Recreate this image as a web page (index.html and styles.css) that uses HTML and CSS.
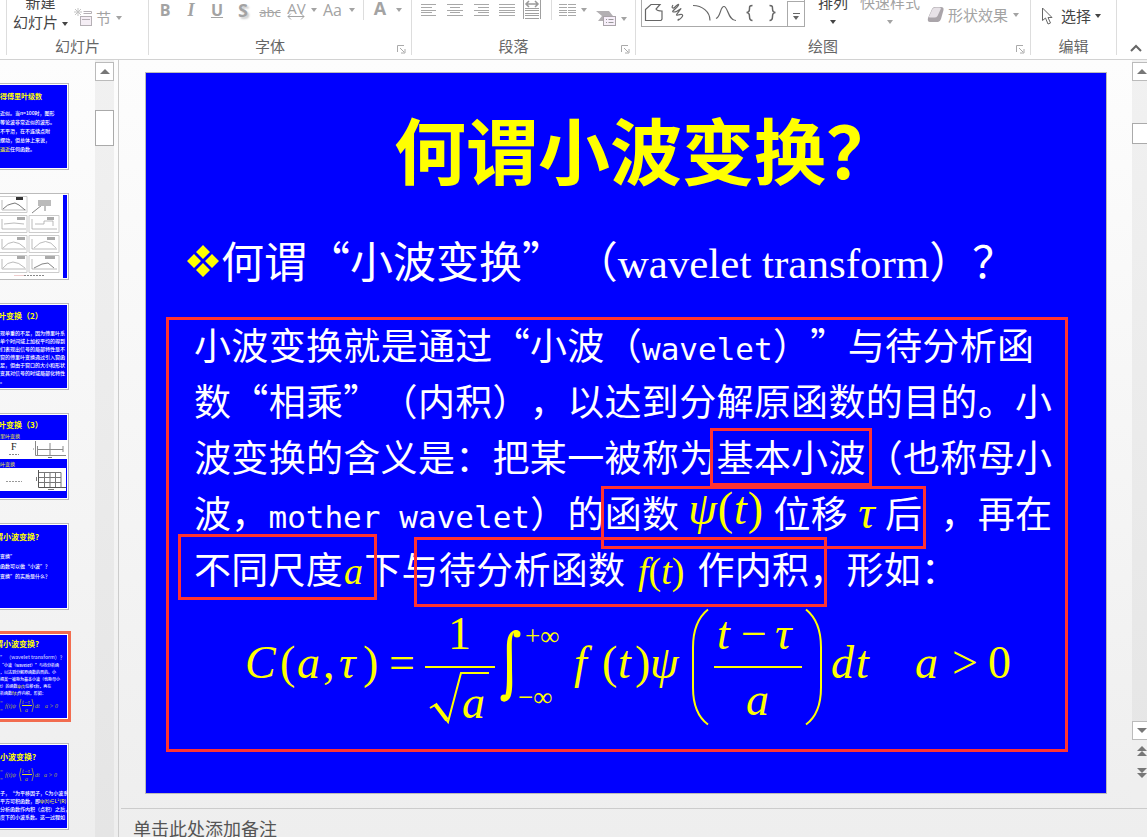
FILE: index.html
```html
<!DOCTYPE html>
<html lang="zh-CN">
<head>
<meta charset="utf-8">
<title>何谓小波变换？</title>
<link rel="stylesheet" href="styles.css">
</head>
<body>
<header class="ribbon">
  <section class="group group-slides">
    <div class="tools">
      <button class="two-line"><span>新建</span><span>幻灯片<i class="caret"></i></span></button>
      <button class="side off">
        <svg width="20" height="20" viewBox="0 0 20 20"><path d="M4 0v8M0 4h8M1 1l6 6M7 1L1 7" stroke="#c4c4c4" fill="none"/><path d="M9.500 3.500h8v2h-8" stroke="#b5b0b5" fill="none"/><rect x="6.500" y="8.500" width="11" height="9" fill="#f5eef5" stroke="#b5b0b5"/><path d="M8 11.500h8" stroke="#b5b0b5"/></svg>
        <span>节</span><i class="caret"></i></button>
    </div>
    <div class="label">幻灯片</div>
  </section>
  <section class="group group-font">
    <div class="tools font-tools off">
      <button class="glyph bold">B</button>
      <button class="glyph italic">I</button>
      <button class="glyph underline">U</button>
      <button class="glyph shadow">S</button>
      <button class="glyph strike">abc</button>
      <button class="glyph spacing"><span>AV</span><i class="caret"></i>
        <svg class="under" width="18" height="7" viewBox="0 0 18 7"><path d="M1 3.500h16M4 .5l-3 3 3 3M14 .5l3 3-3 3" fill="none" stroke="#a3a3a3"/></svg></button>
      <button class="glyph"><span>Aa</span><i class="caret"></i></button>
      <span class="rule"></span>
      <button class="glyph color"><span>A</span><i class="caret"></i></button>
    </div>
    <div class="label wide">字体</div>
    <button class="launcher" aria-label="字体设置"><svg width="9" height="9" viewBox="0 0 9 9"><path d="M.5 7V.5H7M3 3l4 4M8 4v4H4" fill="none" stroke="#aaa"/></svg></button>
  </section>
  <section class="group group-para">
    <div class="tools para-tools off">
      <button aria-label="左对齐"><svg width="16" height="20" viewBox="0 0 16 20"><path d="M0 4.500h15M0 7.500h11M0 10.500h15M0 12.500h11M0 15.500h15" stroke="#a8a8a8"/></svg></button>
      <button aria-label="居中"><svg width="16" height="20" viewBox="0 0 16 20"><path d="M0 4.500h16M3 7.500h10M0 10.500h16M3 12.500h10M0 15.500h16" stroke="#a8a8a8"/></svg></button>
      <button aria-label="右对齐"><svg width="16" height="20" viewBox="0 0 16 20"><path d="M1 4.500h15M5 7.500h11M1 10.500h15M5 12.500h11M1 15.500h15" stroke="#a8a8a8"/></svg></button>
      <button aria-label="两端对齐"><svg width="16" height="20" viewBox="0 0 16 20"><path d="M0 4.500h16M0 7.500h16M0 10.500h16M0 12.500h16M0 15.500h16" stroke="#a8a8a8"/></svg></button>
      <button aria-label="分散对齐"><svg width="18" height="20" viewBox="0 0 18 20"><path d="M.5 0v19M17.500 0v19M2 8.500h14M2 10.500h14M2 13.500h14M2 15.500h14M2 18.500h14" stroke="#a0a0a0"/><path d="M4 4h10M6 1L3 4l3 3M12 1l3 3-3 3" fill="none" stroke="#999" stroke-width="1.500"/></svg></button>
      <span class="rule"></span>
      <button aria-label="分栏"><svg width="17" height="20" viewBox="0 0 17 20"><path d="M0 4.500h8M0 7.500h8M0 10.500h8M0 12.500h8M0 15.500h8M9 4.500h8M9 7.500h8M9 10.500h8M9 12.500h8M9 15.500h8" stroke="#a8a8a8"/></svg><i class="caret"></i></button>
      <button class="smartart" aria-label="转换为 SmartArt"><svg width="21" height="16" viewBox="0 0 21 16"><path d="M0 0h13l4 5-4 5H2l4-5z" fill="#b3b0b3"/><rect x="7.500" y="5.500" width="12" height="9" fill="#f7effa" stroke="#a9a3a9"/><path d="M10 8.500h1M12.500 8.500h5M10 11.500h1M12.500 11.500h5" stroke="#999"/></svg><i class="caret"></i></button>
    </div>
    <div class="label wide">段落</div>
    <button class="launcher" aria-label="段落设置"><svg width="9" height="9" viewBox="0 0 9 9"><path d="M.5 7V.5H7M3 3l4 4M8 4v4H4" fill="none" stroke="#aaa"/></svg></button>
  </section>
  <section class="group group-draw">
    <div class="tools">
      <div class="gallery">
        <svg width="145" height="26" viewBox="0 0 145 26" fill="none" stroke="#666" stroke-width="1.200"><path d="M3.500 9.500L9 4.500h9l-4 4.500c1 2 3 2 6 2v8l-1 1.500H3.500z"/><path d="M31 5c-2 3 0 4 2 2s5-4 3-1-8 6-4 6 9-6 6-2-5 6-2 5 6-1 4 2-6 4-3 2"/><path d="M51 5.500c9 0 17 6 17 15"/><path d="M74 18.500c5-2 4-12 8-12s4 14 12 14"/><path d="M110.500 5.500c-3 0-3 1-3 3s0 4-3 4c3 0 3 2 3 4s0 4 3 4M127.500 5.500c3 0 3 1 3 3s0 4 3 4c-3 0-3 2-3 4s0 4-3 4" stroke-width="1.500"/></svg>
        <button class="more" aria-label="更多形状"><i class="bar"></i><i class="caret"></i></button>
      </div>
      <button class="stack arrange"><span>排列</span><i class="caret"></i></button>
      <button class="stack styles off"><span>快速样式</span><i class="caret"></i></button>
      <button class="side effects off">
        <svg width="19" height="18" viewBox="0 0 19 18"><path d="M2 12l4-9q1-2 3-2h6q3 0 2.500 3L15 13q-1 3-3 3H4q-3 0-2-4z" fill="#aaa5aa"/><path d="M3 10.500L6.500 3q1-1.500 3-1.500h4q2 0 1 2L11.500 10q-1 1.500-3 1.500H4q-1.500 0-1-1z" fill="#e6e1e6"/></svg>
        <span>形状效果</span><i class="caret"></i></button>
    </div>
    <div class="label wide">绘图</div>
    <button class="launcher" aria-label="绘图设置"><svg width="9" height="9" viewBox="0 0 9 9"><path d="M.5 7V.5H7M3 3l4 4M8 4v4H4" fill="none" stroke="#aaa"/></svg></button>
  </section>
  <section class="group group-edit">
    <div class="tools">
      <button class="side select">
        <svg width="13" height="18" viewBox="0 0 13 18"><path d="M1.500 1v12.500l3-2.500 2.500 6 2.500-1-2.500-5.500h4z" fill="#fff" stroke="#666"/></svg>
        <span>选择</span><i class="caret"></i></button>
    </div>
    <div class="label">编辑</div>
  </section>
  <button class="collapse" aria-label="折叠功能区"><svg width="12" height="8" viewBox="0 0 12 8"><path d="M1 7l5-5 5 5" fill="none" stroke="#666" stroke-width="2"/></svg></button>
</header>

<div class="workspace">
  <nav class="thumbs" aria-label="幻灯片缩略图">
    <ol>
      <li class="thumb t1"><b>得傅里叶级数</b>
        <p>近似。当n=100时，图形</p><p>等论波非常近似的波形。</p><p>不平滑，在不连续点附</p><p>摆动，但总体上来说，</p><p><em>逼近</em>任何函数。</p></li>
      <li class="thumb t2">
        <svg width="67" height="83" viewBox="0 0 67 83"><rect width="67" height="83" fill="#fff"/><rect x="63" width="4" height="83" fill="#00f"/>
          <g fill="none" stroke="#ccc"><path d="M0 1.500h27v16H0M0 20.500h27v17H0M0 40.500h27v17H0M0 60.500h27v17H0M29 20.500h30v17H29zM29 40.500h30v17H29zM29 60.500h30v17H29z"/></g>
          <g fill="none" stroke="#aaa" stroke-width=".8"><path d="M2 5v10h24M2 24v10h24M2 44v10h24M2 64v10h24M32 24v10h25M32 44v10h25M32 64v10h25"/><path d="M3 14q5-5 8-5l4-1 4 2 6 5" stroke="#555"/><path d="M4 29l10-1 10 1M35 29h9v-3h9v5M3 53q10-12 22 0M34 53q12-13 22 0M3 73q9-12 22 0"/><path d="M34 73l8-4 6-1 6 5M32 18l10-8M45 11v5" stroke="#666"/></g>
          <rect x="16" y="2" width="7" height="3" fill="#333"/><rect x="38" y="5" width="13" height="6" fill="#bbb"/><g fill="#aaa"><rect x="17" y="22" width="8" height="3"/><rect x="17" y="42" width="8" height="3"/><rect x="17" y="61" width="8" height="3"/><rect x="47" y="22" width="7" height="3"/><rect x="47" y="42" width="8" height="3"/><rect x="45" y="61" width="10" height="3"/></g>
          <path d="M14 80.500h10" stroke="#ecc"/><path d="M24 80.500h20" stroke="#888" stroke-dasharray="2 1"/></svg></li>
      <li class="thumb t3"><b>叶变换（2）</b>
        <p>现单重的不足，因为傅里叶系</p><p>单个时间域上加权平均的得到</p><p>们表现出信号的局部特性是不</p><p>窗的傅里叶变换通过引入窗函</p><p>足，但由于窗口的大小和形状</p><p>变其对信号的时域局部化特性</p><p>。</p></li>
      <li class="thumb t4"><b>叶变换（3）</b><em>里叶变换</em>
        <svg width="67" height="19" viewBox="0 0 67 19"><rect width="67" height="19" fill="#fff"/><text x="11" y="10" font-family="Liberation Serif" font-size="10" fill="#222">F</text><path d="M9 14.500h10" stroke="#888" stroke-dasharray="2 1"/><path d="M35.500 1v14.500H66M33 9h1M50 3v12M37 9.500h26M37.500 6v9M63 6v6" fill="none" stroke="#888"/><path d="M48 17.500h4" stroke="#777"/></svg>
        <em>叶变换</em>
        <svg width="67" height="24" viewBox="0 0 67 24"><rect width="66" height="23" fill="#fff"/><path d="M6 13.500h16" stroke="#999" stroke-dasharray="2 1"/><path d="M38.500 2v17.500H66" fill="none" stroke="#555"/><path d="M39 4.500h22v15M44.500 4v15M50 4v15M55.500 4v15M39 9.500h22M39 14.500h22" fill="none" stroke="#777"/><path d="M48 21.500h6M36.500 9v4" stroke="#777"/></svg></li>
      <li class="thumb t5"><b>谓小波变换?</b><p>变换”</p><p>函数可以做“小波”？</p><p>变换”的实质是什么？</p></li>
      <li class="thumb t6 current"><b>谓小波变换?</b><p class="sub">” （wavelet transform）？</p>
        <p>“小波（wavelet）”与待分析函</p><p>，以达到分解原函数的目的。小</p><p>把某一被称为基本小波（也称母小</p><p>t）的函数<em>ψ(t)</em>位移τ后，再在</p><p>析函数<em>f(t)</em>作内积，形如：</p>
        <svg class="eq" width="67" height="16" viewBox="0 0 67 16" font-family="Liberation Serif" font-style="italic" font-size="6" fill="#aaa84c"><text x="0" y="5" font-size="4">∞</text><text x="0" y="13" font-size="4">∞</text><text x="5" y="10">f(t)ψ</text><path d="M21 1q-3 7 0 13M32 1q3 7 0 13" fill="none" stroke="#aaa84c" stroke-width=".8"/><text x="22" y="6">t−τ</text><path d="M22 7.500h10" stroke="#dddc20"/><text x="25" y="14">a</text><text x="35" y="10">dt</text><text x="45" y="10">a &gt; 0</text></svg></li>
      <li class="thumb t7"><b>小波变换?</b>
        <svg class="eq" width="67" height="16" viewBox="0 0 67 16" font-family="Liberation Serif" font-style="italic" font-size="6" fill="#aaa84c"><text x="0" y="5" font-size="4">∞</text><text x="0" y="13" font-size="4">∞</text><text x="5" y="10">f(t)ψ</text><path d="M21 1q-3 7 0 13M32 1q3 7 0 13" fill="none" stroke="#aaa84c" stroke-width=".8"/><text x="22" y="6">t−τ</text><path d="M22 7.500h10" stroke="#dddc20"/><text x="25" y="14">a</text><text x="35" y="10">dt</text><text x="44" y="10">a &gt; 0</text></svg>
        <p>子，“为平移因子，C为小波系</p><p>平方可积函数，即<em>ψ(t)∈L²(R)</em></p><p>分析函数作内积（点积）之后，</p><p>度下的小波系数。这一过程如</p></li>
    </ol>
  </nav>
  <div class="scroll left-scroll">
    <button class="arrow" aria-label="向上滚动"><i class="tri up"></i></button>
    <div class="handle"></div>
  </div>
  <main class="editor">
    <div class="view">
      <div class="stage">
        <article class="slide">
          <h1>何谓小波变换？</h1>
          <h2><svg width="32" height="32" viewBox="0 0 32 32" fill="#ff0"><path d="M16 0l7 7-7 7-7-7zM16 18l7 7-7 7-7-7zM7 9l7 7-7 7-7-7zM25 9l7 7-7 7-7-7z"/></svg><span>何谓“小波变换” （<span class="serif">wavelet transform</span>）？</span></h2>
          <section class="body">
            <p class="short">小波变换就是通过“小波（<span class="mono">wavelet</span>）”与待分析函</p>
            <p>数“相乘”（内积），以达到分解原函数的目的。小</p>
            <p>波变换的含义是：把某一被称为基本小波（也称母小</p>
            <p>波，<span class="mono">mother wavelet</span>）的函数<span class="math psi"><i>ψ</i><span class="paren">(</span><i>t</i><span class="paren">)</span></span>位移<span class="math tau"><i>τ</i></span>后<span class="half"></span>，再在</p>
            <p class="last">不同尺度<span class="math var"><i>a</i></span>下与待分析函数<span class="math fun"><i>f</i>(<i>t</i>)</span>作内积，形如：</p>
            <svg class="equation" width="780" height="130" viewBox="240 600 780 130" role="img" aria-label="连续小波变换公式">
              <g class="up"><text x="280" y="678">(</text><text x="323" y="678">,</text><text x="363" y="678">)</text><text x="389" y="678">=</text><text x="448" y="649">1</text><text x="602" y="678">(</text><text x="635" y="678">)</text><text x="741" y="649">−</text><text x="952" y="678">&gt;</text><text x="988" y="678">0</text></g>
              <g class="it"><text x="245" y="678">C</text><text x="297" y="678">a</text><text x="339" y="678">τ</text><text x="462" y="718">a</text><text x="574" y="678">f</text><text x="618" y="678">t</text><text x="650" y="678">ψ</text><text x="717" y="649">t</text><text x="775" y="649">τ</text><text x="746" y="715">a</text><text x="831" y="678">d</text><text x="856" y="678">t</text><text x="915" y="678">a</text></g>
              <g class="small"><text x="525" y="645">+∞</text><text x="518" y="706">−∞</text></g>
              <g fill="none" stroke="#ff0" stroke-width="2"><path d="M425 667h70M714 667h88"/><path d="M430 708l5-3 13 17 13-49h28"/><path d="M435 704l12 16" stroke-width="4"/><path d="M708 609.500q-15 12-15 38v40q0 26 15 37M806 609.500q15 12 15 38v40q0 26-15 37"/></g>
              <path d="M520 634c0-5-7-6-11 1-3 6-2 14-2 30 0 18 0 26-2 31-1 3-2 1-4 2 0 5 8 5 10-3 2-7 1-17 1-30 0-18-1-25 1-31 2-3 6 1 7 0z" fill="#ff0"/><circle cx="517" cy="634" r="3.500" fill="#ff0"/><circle cx="504" cy="698" r="3.500" fill="#ff0"/>
            </svg>
            <span class="mark m1"></span><span class="mark m2"></span><span class="mark m3"></span><span class="mark m4"></span>
          </section>
        </article>
      </div>
      <div class="scroll right-scroll">
        <button class="arrow" aria-label="向上滚动"><i class="tri up"></i></button>
        <div class="handle"></div>
        <button class="arrow down" aria-label="向下滚动"><i class="tri dn"></i></button>
        <button class="page" aria-label="上一张幻灯片"><i class="tri up"></i><i class="tri up"></i></button>
        <button class="page" aria-label="下一张幻灯片"><i class="tri dn"></i><i class="tri dn"></i></button>
      </div>
    </div>
    <footer class="notes">单击此处添加备注</footer>
  </main>
</div>
</body>
</html>
```
FILE: styles.css
```css
* { box-sizing: border-box; }
html, body { height: 100%; margin: 0; }
body {
  display: flex;
  flex-direction: column;
  overflow: hidden;
  font-family: "Noto Sans CJK SC", sans-serif;
  color: #444;
  text-spacing-trim: space-all;
}
button { border: 0; padding: 0; margin: 0; background: none; color: inherit; font: inherit; }
p, h1, h2, ol { margin: 0; padding: 0; }
svg { display: block; flex: none; }

/* Ribbon */
.ribbon {
  display: flex;
  height: 60px;
  flex: none;
  padding-left: 6px;
  border-bottom: 1px solid #d2d2d2;
  background: #fff;
  overflow: hidden;
  font-size: 15px;
}
.group { position: relative; display: flex; flex-direction: column; flex: none; height: 55px; border-right: 1px solid #ddd; }
.group-slides { width: 143px; border-left: 1px solid #ddd; }
.group-font { width: 263px; }
.group-para { width: 224px; }
.group-draw { width: 395px; }
.group-edit { width: 86px; }
.tools { display: flex; height: 37px; align-items: flex-start; }
.label { height: 18px; line-height: 18px; text-align: center; color: #666; }
.label.wide { padding-right: 20px; }
.launcher { position: absolute; right: 5px; bottom: 1px; }
.off { color: #a3a3a3; }
.caret { display: inline-block; flex: none; border: solid transparent; border-width: 4px 3px 0; border-top-color: currentColor; }
.two-line { display: flex; flex-direction: column; align-items: center; margin: -8px 0 0 6px; line-height: 20px; white-space: nowrap; }
.two-line .caret { margin: 0 0 2px 4px; }
.side { display: flex; align-items: center; height: 20px; margin-top: 8px; line-height: 20px; white-space: nowrap; }
.group-slides .side { margin-left: 6px; gap: 2px; }
.group-slides .side .caret { margin-left: 3px; }

.font-tools { display: grid; grid-template-columns: 26px 26px 26px 26px 28px 36px 38px 10px 40px; padding-left: 3px; font-family: "Open Sans", sans-serif; }
.glyph { position: relative; display: flex; align-items: center; justify-content: center; gap: 7px; height: 20px; line-height: 20px; font-size: 16px; }
.bold { font-weight: 700; }
.italic { font-family: "Liberation Serif", serif; font-style: italic; font-weight: 700; font-size: 18px; }
.underline { font-weight: 700; text-decoration: underline; }
.shadow { font-weight: 700; text-shadow: 2px 2px 2px #ccc; font-size: 18px; }
.strike { text-decoration: line-through; font-size: 13px; padding-top: 3px; }
.spacing { font-size: 15px; height: 16px; line-height: 16px; gap: 5px; }
.spacing .caret { margin-top: 4px; }
.under { position: absolute; left: 3px; top: 13px; }
.color { font-weight: 700; font-size: 18px; height: 17px; line-height: 17px; gap: 10px; }
.color .caret { margin-top: 3px; }
.rule { justify-self: center; width: 1px; height: 20px; background: #ddd; }

.para-tools { display: grid; grid-template-columns: 26px 26px 26px 24px 24px 10px 36px 30px; padding-left: 9px; }
.para-tools .rule { margin-right: 2px; }
.para-tools button { display: flex; align-items: center; gap: 5px; }
.para-tools button + .rule + button { margin-left: 2px; }
.para-tools .smartart { margin: 11px 0 0 3px; gap: 4px; }

.gallery { display: flex; height: 27px; margin-left: 5px; border: solid #aaa; border-width: 0 1px 1px; }
.more { display: flex; flex-direction: column; align-items: center; gap: 2px; width: 17px; margin-top: 1px; padding-top: 11px; border: solid #aaa; border-width: 1px 0 0 1px; color: #666; }
.bar { width: 7px; height: 1px; background: #666; }
.stack { display: flex; flex-direction: column; align-items: center; gap: 8px; margin-top: -8px; line-height: 20px; white-space: nowrap; }
.arrange { margin-left: 13px; }
.styles { margin-left: 12px; }
.effects { margin: 5px 0 0 6px; gap: 3px; }
.select { margin: 6px 0 0 10px; gap: 7px; }
.effects .caret { margin-left: 2px; }
.select .caret { margin-left: -3px; }
.collapse { align-self: flex-end; margin: 0 0 7px 13px; }

/* Workspace */
.workspace { display: flex; flex: 1; min-height: 0; background: linear-gradient(#fdfdfd, #eee); }
.thumbs { width: 95px; flex: none; overflow: hidden; }
.thumbs ol { display: flex; flex-direction: column; gap: 23px; padding-top: 23px; list-style: none; }
.thumb { width: 69px; height: 87px; flex: none; overflow: hidden; border: solid #bbb; border-width: 1px 1px 1px 0; box-shadow: inset -1px 0 #fff, inset 0 1px #fff, inset 0 -1px #fff; background: #00f; color: #fff; white-space: nowrap; font-size: 5px; }
.thumb b { display: block; color: #ff0; font-size: 8px; line-height: 12px; }
.thumb em { color: #ee3; font-style: normal; }
.thumb p { font-weight: 500; }
.thumb.current { border-color: #f26c4f; box-shadow: 0 0 0 2px #f26c4f, inset -1px 0 #fff, inset 0 1px #fff, inset 0 -1px #fff; }
.t1 { padding-top: 6px; line-height: 9px; }
.t1 b { font-size: 7px; margin-bottom: 6px; }
.t2 { padding-top: 1px; }
.t3 { padding-top: 6px; line-height: 8px; }
.t3 b { margin-bottom: 7px; }
.t3 b, .t4 b { text-indent: -2px; }
.t4 { padding-top: 5px; }
.t4 em { display: block; line-height: 9px; }
.t5 { padding-top: 7px; line-height: 10px; }
.t5 b { margin-bottom: 8px; }
.t5 b, .t6 b { text-indent: -5px; }
.t6 { padding-top: 4px; line-height: 7px; font-size: 4px; }
.t6 .sub { margin: 3px 0 2px; color: #ccf; font-size: 5px; }
.t6 .eq { margin-top: 1px; }
.t7 { padding-top: 7px; line-height: 8px; }
.t7 .eq { margin: 4px 0 6px; }

.scroll { display: flex; flex-direction: column; width: 19px; flex: none; padding-top: 2px; background: linear-gradient(#f1f1f1, #e5e5e5); }
.arrow { display: flex; align-items: center; justify-content: center; height: 19px; flex: none; border: 1px solid #bbb; background: #fff; }
.tri { border: solid transparent; }
.tri.up { border-width: 0 5px 5px; border-bottom-color: #777; }
.tri.dn { border-width: 5px 5px 0; border-top-color: #777; }
.left-scroll .handle { height: 36px; margin-top: 29px; border: 1px solid #aaa; background: #fff; }
.editor { display: flex; flex-direction: column; flex: 1; min-width: 0; margin-left: 4px; border-left: 1px solid #ccc; }
.view { display: flex; flex: 1; min-height: 0; overflow: hidden; }
.right-scroll { margin-right: -4px; }
.right-scroll .handle { height: 21px; margin-top: 42px; border: 1px solid #aaa; background: #fff; }
.right-scroll .down { margin-top: auto; }
.page { display: flex; flex-direction: column; align-items: center; padding-top: 6px; height: 22px; flex: none; background: #efefef; }
.page:last-child { height: 46px; }
.notes { height: 29px; flex: none; margin-left: 2px; padding-left: 12px; border-top: 1px solid #ccc; font-size: 18px; line-height: 38px; color: #555; overflow: hidden; }

/* Slide */
.stage { display: flex; flex: 1; min-width: 0; padding: 12px 25px 14px 26px; }
.slide { flex: 1; min-width: 0; border: 1px solid #bbb; background: #00f; color: #fff; }
h1 { margin-top: 35px; padding-left: 40px; text-align: center; font-size: 72px; line-height: 80px; font-weight: 700; color: #ff0; }
h2 { display: flex; align-items: center; gap: 2px; height: 56px; margin: 45px 0 28px 41px; font-size: 43px; line-height: 56px; font-weight: 400; white-space: nowrap; }
.serif { font-family: "Liberation Serif", serif; }
.body { position: relative; margin: 0 38px 0 20px; padding: 0 13px 19px 25px; border: 3px solid #ff3333; font-size: 37px; }
.body p { height: 56px; line-height: 56px; text-align-last: justify; white-space: nowrap; }
.body p:first-child { margin-top: -4px; }
.body .short { padding-right: 18px; }
.body .last { padding-right: 94px; }
.mono { font-family: "DejaVu Sans Mono", monospace; font-size: 31px; }
.half { display: inline-block; width: 18px; }
.math { display: inline-block; line-height: 40px; font-family: "Liberation Serif", serif; font-size: 46px; color: #ff0; text-align: center; text-align-last: center; }
.psi { width: 94px; vertical-align: 4px; }
.paren { padding: 0 1px; }
.tau { width: 37px; }
.var { width: 21px; font-size: 38px; }
.fun { width: 72px; font-size: 38px; }
.equation { margin: 4px 0 0 46px; font-family: "Liberation Serif", serif; font-size: 46px; fill: #ff0; }
.equation .it { font-style: italic; }
.equation .small { font-size: 27px; }
.mark { position: absolute; border: 3px solid #ff3333; }
.m1 { left: 541px; top: 108px; width: 162px; height: 58px; }
.m2 { left: 432px; top: 166px; width: 325px; height: 63px; }
.m3 { left: 9px; top: 214px; width: 199px; height: 66px; }
.m4 { left: 245px; top: 217px; width: 413px; height: 70px; }
```
